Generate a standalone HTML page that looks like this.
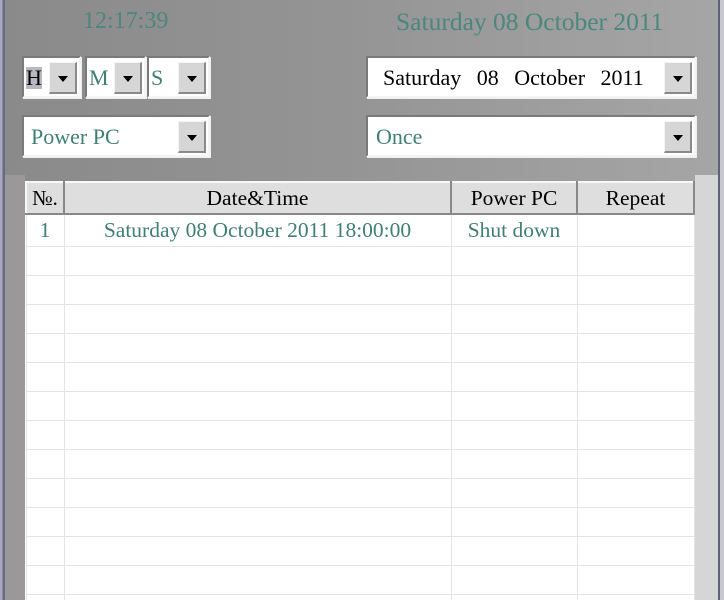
<!DOCTYPE html>
<html style="width:724px;height:600px;overflow:hidden"><head><style>
*{margin:0;padding:0;box-sizing:border-box}
body{width:724px;height:600px;overflow:hidden;position:relative;background:linear-gradient(90deg,#8a8a8a 0%,#959595 50%,#a6a6a6 100%);font-family:"Liberation Serif",serif}
.abs{position:absolute}
.box{position:absolute;background:#fff;border-top:2px solid #7a7a7a;border-left:2px solid #7a7a7a;border-right:2px solid #f4f4f4;border-bottom:2px solid #f4f4f4;box-shadow:1px 1px 0 #eee}
.btn{position:absolute;top:4px;bottom:2px;width:28px;right:2px;background:#d6d6d6;border-top:1px solid #f4f4f4;border-left:1px solid #f4f4f4;border-right:2px solid #8a8a8a;border-bottom:2px solid #8a8a8a}
.btn:after{content:"";position:absolute;left:8px;top:13px;border-left:5px solid transparent;border-right:5px solid transparent;border-top:6px solid #000}
.t{position:absolute;font-size:22px;line-height:22px;top:9px}
.g{color:#3f7f74}
.wrap{position:absolute;left:25px;top:181px;width:670px;height:419px;overflow:hidden;background:#fff}
table{width:670px;border-collapse:collapse;background:#fff;font-size:21.5px}
th{height:32px;background:#dedede;font-weight:normal;border:2px solid;border-color:#f8f8f8 #888 #888 #f8f8f8;text-align:center}
td{height:29px;border:1px solid #e4e4e4;text-align:center;color:#3f7f74;padding:0}
</style></head><body>
<div class="abs" style="left:0;top:0;width:2px;height:600px;background:#a8a8c0"></div>
<div class="abs" style="left:3px;top:0;width:2px;height:600px;background:#6a6a88"></div>
<div class="abs" style="left:5px;top:175px;width:20px;height:425px;background:#9a9898"></div>
<div class="abs" style="left:695px;top:175px;width:23px;height:425px;background:#d6d6d6"></div>
<div class="abs" style="left:718px;top:0;width:2px;height:600px;background:#606078"></div>
<div class="abs" style="left:720px;top:0;width:4px;height:600px;background:#c8c8d0"></div>

<div class="abs g" style="left:83px;top:8px;font-size:24px;color:#4b877d">12:17:39</div>
<div class="abs g" style="left:396px;top:7px;font-size:25.5px;color:#4b877d">Saturday 08 October 2011</div>

<div class="box" style="left:22px;top:56px;width:59px;height:42px"><span class="t" style="left:2px;background:#b8b8c0">H</span><div class="btn"></div></div>
<div class="box" style="left:85px;top:56px;width:61px;height:42px"><span class="t g" style="left:2px">M</span><div class="btn"></div></div>
<div class="box" style="left:147px;top:56px;width:63px;height:42px"><span class="t g" style="left:2px">S</span><div class="btn"></div></div>
<div class="box" style="left:366px;top:56px;width:330px;height:42px"><span class="t" style="left:15px;word-spacing:10px">Saturday 08 October 2011</span><div class="btn"></div></div>
<div class="box" style="left:22px;top:115px;width:188px;height:42px"><span class="t g" style="left:7px">Power PC</span><div class="btn"></div></div>
<div class="box" style="left:366px;top:115px;width:330px;height:42px"><span class="t g" style="left:8px">Once</span><div class="btn"></div></div>

<div class="wrap"><table>
<tr><th style="width:38px">№.</th><th style="width:387px">Date&amp;Time</th><th style="width:126px">Power PC</th><th>Repeat</th></tr>
<tr><td style="height:32px">1</td><td>Saturday 08 October 2011 18:00:00</td><td>Shut down</td><td></td></tr>
<tr><td></td><td></td><td></td><td></td></tr>
<tr><td></td><td></td><td></td><td></td></tr>
<tr><td></td><td></td><td></td><td></td></tr>
<tr><td></td><td></td><td></td><td></td></tr>
<tr><td></td><td></td><td></td><td></td></tr>
<tr><td></td><td></td><td></td><td></td></tr>
<tr><td></td><td></td><td></td><td></td></tr>
<tr><td></td><td></td><td></td><td></td></tr>
<tr><td></td><td></td><td></td><td></td></tr>
<tr><td></td><td></td><td></td><td></td></tr>
<tr><td></td><td></td><td></td><td></td></tr>
<tr><td></td><td></td><td></td><td></td></tr>
<tr><td></td><td></td><td></td><td></td></tr>
</table></div>
</body></html>
